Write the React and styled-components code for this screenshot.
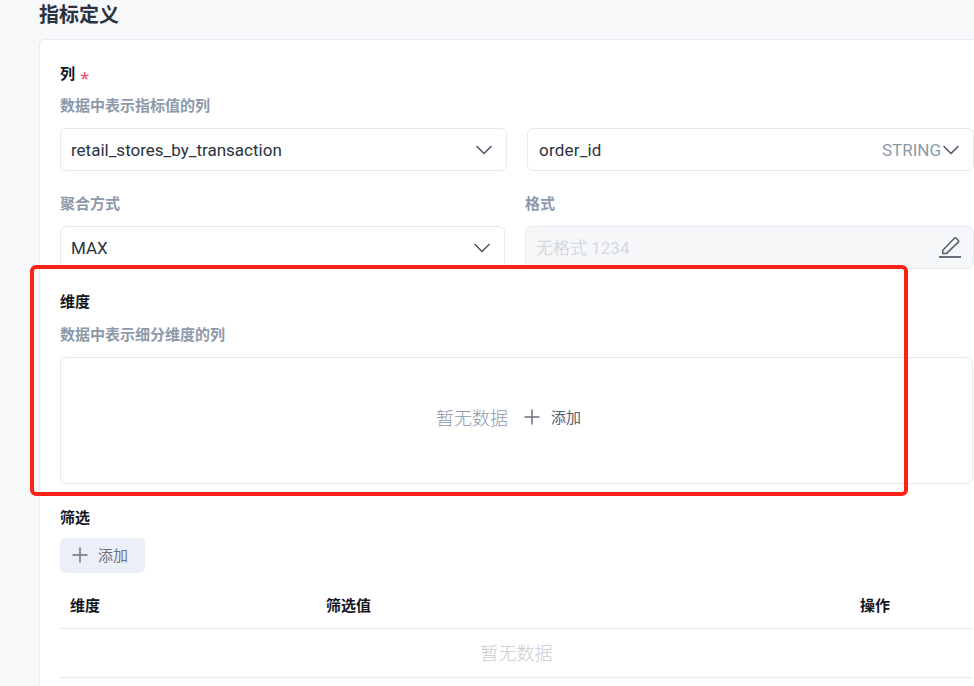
import React from "react";
import styled, { createGlobalStyle } from "styled-components";
import { ChevronDown, Plus } from "lucide-react";

const GlobalStyle = createGlobalStyle`
  html, body {
    margin: 0;
    padding: 0;
    background: #f7f8fa;
  }
  body {
    font-family: "Noto Sans", "Noto Sans CJK SC", sans-serif;
  }
`;

function App() {
  return (
    <Page>
      <GlobalStyle />
      <Title>指标定义</Title>
      <Card>
        <FieldLabel>
          列<Required>*</Required>
        </FieldLabel>
        <Hint>数据中表示指标值的列</Hint>
        <FieldRow $columns="447px 447px">
          <SelectBox>
            <SelectText>retail_stores_by_transaction</SelectText>
            <Chevron />
          </SelectBox>
          <SelectBox>
            <OrderText>order_id</OrderText>
            <TypeTag>STRING</TypeTag>
            <TagChevron />
          </SelectBox>
        </FieldRow>

        <FieldRow $columns="445px 449px" $top="22px">
          <SubLabel>聚合方式</SubLabel>
          <SubLabel>格式</SubLabel>
        </FieldRow>
        <FieldRow $columns="445px 449px" $top="13px">
          <SelectBox>
            <SelectText>MAX</SelectText>
            <Chevron />
          </SelectBox>
          <FormatBox>
            <FormatText>无格式 1234</FormatText>
            <svg width="24" height="24" viewBox="0 0 24 24" fill="none" stroke="#565e6d">
              <path d="M4.8 17.6v-3.4L16.4 2.2a1.2 1.2 0 0 1 1.7 0l2.2 2.2a1.2 1.2 0 0 1 0 1.7L8.3 17.6z" strokeWidth="1.5" strokeLinejoin="round" />
              <path d="M1 21h22" strokeWidth="1.8" />
            </svg>
          </FormatBox>
        </FieldRow>

        <FieldLabel $top="22px">维度</FieldLabel>
        <Hint $top="13px">数据中表示细分维度的列</Hint>
        <EmptyPanel>
          <EmptyText>暂无数据</EmptyText>
          <PlainAdd>
            <PlusIcon />
            <span>添加</span>
          </PlainAdd>
        </EmptyPanel>

        <FieldLabel $top="23px">筛选</FieldLabel>
        <AddButton>
          <PlusIcon />
          <span>添加</span>
        </AddButton>

        <TableHead>
          <span>维度</span>
          <span>筛选值</span>
          <span>操作</span>
        </TableHead>
        <TableEmpty>暂无数据</TableEmpty>
      </Card>
      <Highlight />
    </Page>
  );
}

export default App;

const Page = styled.div`
  position: relative;
  width: 974px;
  height: 686px;
  overflow: hidden;
  background: #f7f8fa;
`;
const Title = styled.h1`
  margin: 0 0 0 39px;
  height: 39px;
  padding-top: 1px;
  box-sizing: border-box;
  font-size: 20px;
  line-height: 28px;
  font-weight: 700;
  color: #2b3242;
`;
const Card = styled.div`
  width: 960px;
  height: 700px;
  margin-left: 39px;
  padding: 23px 25px 0 20px;
  box-sizing: border-box;
  background: #fff;
  border: 1px solid #e8ebf2;
  border-radius: 6px;
`;
const FieldLabel = styled.div`
  height: 20px;
  margin-top: ${(p) => p.$top || 0};
  font-size: 15px;
  line-height: 20px;
  font-weight: 600;
  color: #14171f;
`;
const Required = styled.span`
  margin-left: 5px;
  font-size: 17px;
  line-height: 20px;
  vertical-align: -5px;
  font-weight: 400;
  color: #f5475f;
`;
const Hint = styled.div`
  height: 20px;
  margin: ${(p) => p.$top || "12px"} 0 13px;
  font-size: 15px;
  line-height: 20px;
  font-weight: 600;
  color: #8d99aa;
`;
const SubLabel = styled.div`
  height: 20px;
  font-size: 15px;
  line-height: 20px;
  font-weight: 600;
  color: #8d99aa;
`;
const FieldRow = styled.div`
  display: grid;
  grid-template-columns: ${(p) => p.$columns};
  column-gap: 20px;
  margin-top: ${(p) => p.$top || 0};
`;
const SelectBox = styled.div`
  display: flex;
  align-items: center;
  height: 43px;
  padding: 0 8px 0 10px;
  box-sizing: border-box;
  background: #fff;
  border: 1px solid #e6e9f1;
  border-radius: 6px;
  font-family: Roboto, "Noto Sans CJK SC", sans-serif;
`;
const SelectText = styled.span`
  flex: 1;
  font-size: 17px;
  color: #2b3242;
`;
const OrderText = styled(SelectText)`
  padding-left: 1px;
  letter-spacing: 0.2px;
`;
const TypeTag = styled.span`
  font-size: 17px;
  color: #8d99aa;
`;
const Chevron = styled(ChevronDown).attrs({ size: 28, strokeWidth: 1.3, color: "#4d5565" })`
  flex: none;
`;
const TagChevron = styled(Chevron)`
  margin-left: -4px;
`;
const FormatBox = styled(SelectBox)`
  background: #f6f7f9;
  padding-right: 11px;
`;
const FormatText = styled.span`
  flex: 1;
  margin-top: -2px;
  font-size: 17px;
  color: #d5d9e0;
`;
const PlusIcon = styled(Plus).attrs({ size: 24, strokeWidth: 1.5, color: "#6b7380" })`
  flex: none;
`;
const EmptyPanel = styled.div`
  display: flex;
  align-items: center;
  justify-content: center;
  gap: 12px;
  height: 127px;
  box-sizing: border-box;
  padding: 0 16px 8px 0;
  border: 1px solid #e6e9f1;
  border-radius: 6px;
`;
const EmptyText = styled.span`
  font-size: 18px;
  font-weight: 300;
  color: #8d99aa;
`;
const PlainAdd = styled.div`
  display: flex;
  align-items: center;
  gap: 7px;
  font-size: 15px;
  color: #565e6d;
`;
const AddButton = styled.div`
  display: flex;
  align-items: center;
  gap: 6px;
  width: 85px;
  height: 35px;
  margin-top: 11px;
  padding: 0 0 2px 8px;
  box-sizing: border-box;
  background: #ebeff8;
  border-radius: 5px;
  font-size: 15px;
  color: #6b7380;
`;
const TableHead = styled.div`
  display: grid;
  grid-template-columns: 256px 534px 1fr;
  align-items: center;
  height: 44px;
  margin-top: 12px;
  padding: 0 0 3px 10px;
  box-sizing: border-box;
  border-bottom: 1px solid #e8e9f3;
  font-size: 15px;
  line-height: 20px;
  font-weight: 600;
  color: #14171f;
`;
const TableEmpty = styled.div`
  display: flex;
  align-items: center;
  justify-content: center;
  height: 49px;
  padding-bottom: 2px;
  box-sizing: border-box;
  border-bottom: 1px solid #e8e9f3;
  font-size: 18px;
  font-weight: 300;
  color: #c9ccd3;
`;
// the red annotation drawn over the screenshot
const Highlight = styled.div`
  position: absolute;
  left: 30px;
  top: 265px;
  width: 878px;
  height: 231px;
  box-sizing: border-box;
  border: 4px solid #fb2318;
  border-radius: 6px;
`;
